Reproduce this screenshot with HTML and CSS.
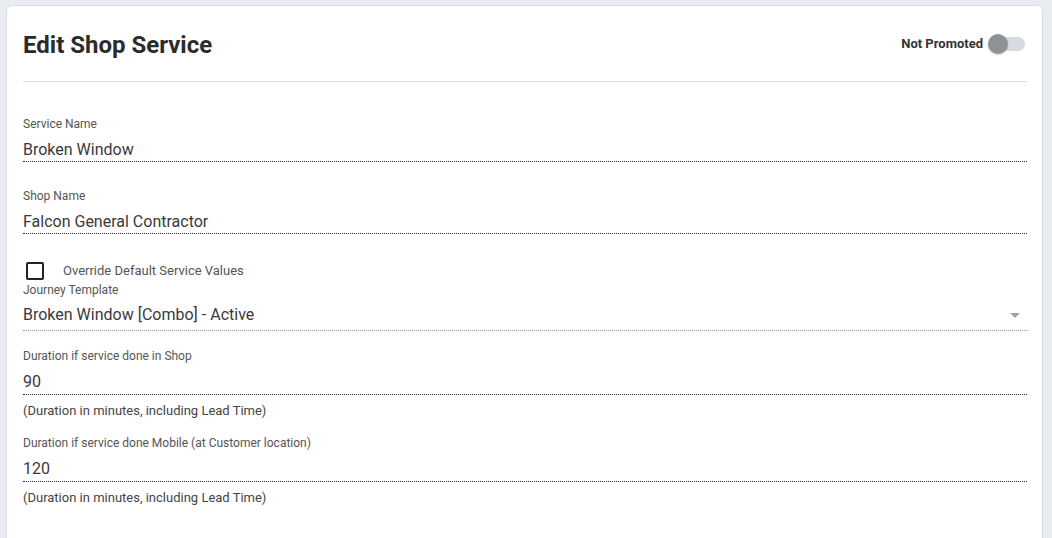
FILE: index.html
```html
<!DOCTYPE html>
<html>
<head>
<meta charset="utf-8">
<link rel="stylesheet" href="styles.css">
</head>
<body>
<div class="card">
  <div class="header">
    <h1 class="title">Edit Shop Service</h1>
    <div class="promo">
      <span class="promo-label">Not Promoted</span>
      <span class="toggle"><span class="track"></span><span class="thumb"></span></span>
    </div>
  </div>
  <div class="form">
    <div class="field">
      <div class="label">Service Name</div>
      <div class="value">Broken Window</div>
    </div>
    <div class="field">
      <div class="label">Shop Name</div>
      <div class="value">Falcon General Contractor</div>
    </div>
    <div class="check-row">
      <span class="checkbox"></span>
      <span class="check-label">Override Default Service Values</span>
    </div>
    <div class="field select-field">
      <div class="label">Journey Template</div>
      <div class="value select">Broken Window [Combo] - Active<span class="arrow"></span></div>
    </div>
    <div class="field dur">
      <div class="label">Duration if service done in Shop</div>
      <div class="value">90</div>
      <div class="hint">(Duration in minutes, including Lead Time)</div>
    </div>
    <div class="field dur">
      <div class="label">Duration if service done Mobile (at Customer location)</div>
      <div class="value">120</div>
      <div class="hint">(Duration in minutes, including Lead Time)</div>
    </div>
  </div>
</div>
</body>
</html>
```

FILE: styles.css
```css
html, body {
  margin: 0;
  padding: 0;
}
body {
  background: #e9ecf1;
  font-family: Roboto, "Liberation Sans", Arial, sans-serif;
  padding: 5px 9px 0 6px;
  height: 538px;
  box-sizing: border-box;
  overflow: hidden;
}
.card {
  background: #fff;
  border: 1px solid #d9dce1;
  border-bottom: none;
  border-radius: 6px 6px 0 0;
  padding: 0 15px 0 16px;
  height: 100%;
  box-sizing: border-box;
}
.header {
  display: flex;
  align-items: center;
  justify-content: space-between;
  padding: 25px 0 22px;
  border-bottom: 1px solid #e0e0e0;
}
.title {
  margin: 0;
  font-size: 24px;
  line-height: 28px;
  font-weight: 700;
  color: #2b2b2b;
}
.promo {
  display: flex;
  align-items: center;
  gap: 5px;
  margin-top: -3px;
  margin-right: 2px;
}
.promo-label {
  font-size: 13px;
  font-weight: 700;
  color: #333;
}
.toggle {
  position: relative;
  width: 37px;
  height: 20px;
  display: inline-block;
}
.track {
  position: absolute;
  left: 2px;
  right: 0;
  top: 3px;
  height: 14px;
  border-radius: 7px;
  background: #d7dadf;
}
.thumb {
  position: absolute;
  left: 0;
  top: 0;
  width: 20px;
  height: 20px;
  border-radius: 50%;
  background: #8e9297;
  box-shadow: 0 1px 2px rgba(0,0,0,0.2);
}
.form {
  padding-top: 35px;
}
.field {
  margin-bottom: 27px;
}
.label {
  font-size: 12px;
  line-height: 14px;
  color: #555;
}
.value {
  margin-top: 6px;
  padding-top: 1px;
  line-height: 23px;
  font-size: 16px;
  color: #3a3a3a;
  border-bottom: 1px dotted #333;
}
.check-row {
  display: flex;
  align-items: center;
  margin-top: 28px;
  padding-left: 3px;
  height: 18px;
}
.checkbox {
  width: 18px;
  height: 18px;
  box-sizing: border-box;
  border: 2px solid #222;
  border-radius: 2px;
}
.check-label {
  margin-left: 19px;
  margin-top: -1px;
  font-size: 13px;
  color: #555;
}
.select-field {
  margin-top: 3px;
  margin-bottom: 18px;
}
.select {
  position: relative;
  margin-top: 5px;
  padding-bottom: 4px;
  border-bottom: 1px dotted #9a9a9a;
}
.arrow {
  position: absolute;
  right: 7px;
  top: 11px;
  width: 0;
  height: 0;
  border-left: 5px solid transparent;
  border-right: 5px solid transparent;
  border-top: 5px solid #a3a3a3;
}
.dur {
  margin-bottom: 17px;
}
.dur .value {
  margin-top: 7px;
  padding-top: 0;
  padding-bottom: 1px;
}
.hint {
  margin-top: 8px;
  font-size: 13px;
  line-height: 16px;
  color: #444;
}
```
